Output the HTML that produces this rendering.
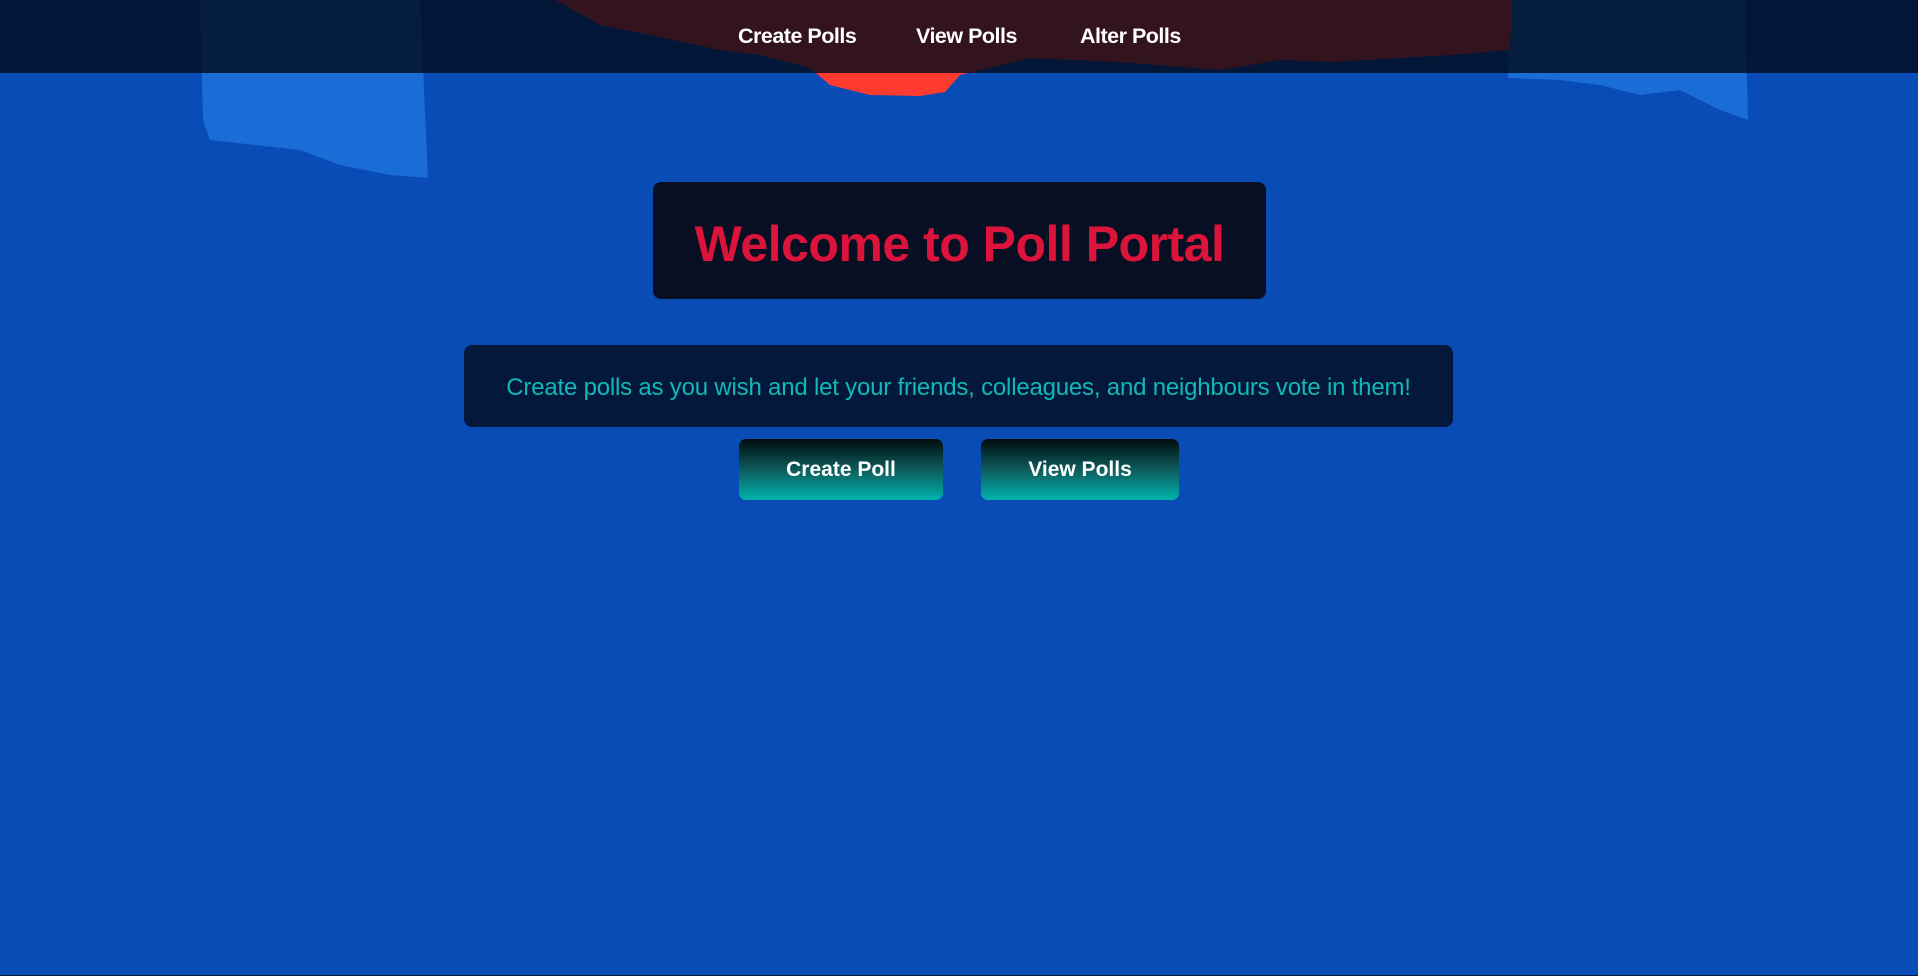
<!DOCTYPE html>
<html><head><meta charset="utf-8">
<style>
html,body{margin:0;padding:0;width:1918px;height:976px;overflow:hidden;}
body{background:#0a4cb6;font-family:"Liberation Sans",sans-serif;position:relative;}
svg.bg{position:absolute;left:0;top:0;}
.nav{position:absolute;left:0;top:0;width:1918px;height:73px;}
.nav a{position:absolute;top:24px;color:#fff;font-weight:bold;font-size:21.5px;text-decoration:none;letter-spacing:-0.5px;}
.title{position:absolute;left:653px;top:182px;width:613px;height:117px;background:#080f22;border-radius:8px;color:#dc143c;font-weight:bold;font-size:50px;text-align:center;line-height:124px;letter-spacing:-0.5px;}
.desc{position:absolute;left:464px;top:345px;width:989px;height:82px;background:#03183a;border-radius:8px;color:#12b8b8;font-size:24px;text-align:center;line-height:86px;letter-spacing:-0.2px;}
.btn{position:absolute;top:439px;height:61px;border-radius:7px;background:linear-gradient(#000c0e,#0e5b5c 50%,#00b3ad);color:#fff;font-weight:bold;font-size:21px;text-align:center;line-height:61px;}
.bl{position:absolute;left:0;top:975px;width:1918px;height:1px;background:#061a40;}
</style></head><body>
<svg class="bg" width="1918" height="976">
<rect x="0" y="0" width="1918" height="976" fill="#0a4cb6"/>
<polygon points="200,0 420,0 428,178 390,175 340,165 300,150 210,140 203,120" fill="#1a6cd6"/>
<polygon points="1505,0 1745,0 1748,120 1720,110 1680,90 1640,95 1600,85 1560,80 1508,78" fill="#1a6cd6"/>
<polygon points="555,0 1512,0 1510,50 1450,55 1400,58 1330,62 1280,60 1220,70 1120,62 1030,58 960,75 945,92 920,96 870,95 830,85 810,68 760,55 720,50 650,35 600,25" fill="#ff3a2e"/>
</svg>
<div class="nav" style="background:rgba(0,10,25,0.8)"></div>
<div class="nav">
<a style="left:738px">Create Polls</a>
<a style="left:916px">View Polls</a>
<a style="left:1080px">Alter Polls</a>
</div>
<div class="title">Welcome to Poll Portal</div>
<div class="desc">Create polls as you wish and let your friends, colleagues, and neighbours vote in them!</div>
<div class="btn" style="left:739px;width:204px">Create Poll</div>
<div class="btn" style="left:981px;width:198px">View Polls</div>
<div class="bl"></div>
</body></html>
